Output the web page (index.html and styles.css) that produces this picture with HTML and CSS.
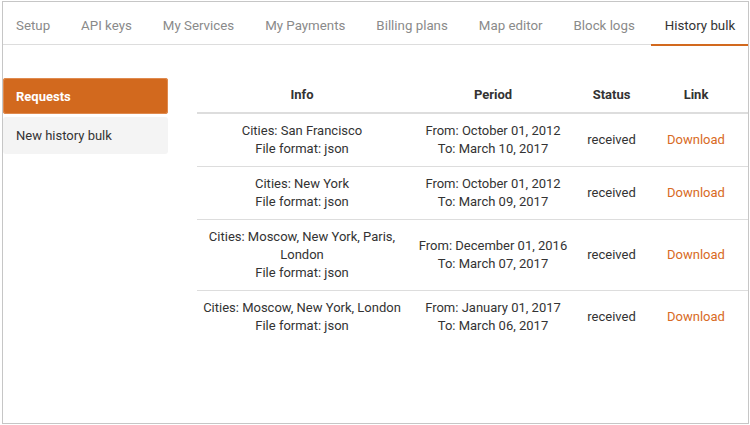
FILE: index.html
```html
<!DOCTYPE html>
<html>
<head>
<meta charset="utf-8">
<link rel="stylesheet" href="styles.css">
</head>
<body>
<div class="frame">
  <nav class="tabs">
    <a class="tab">Setup</a>
    <a class="tab">API keys</a>
    <a class="tab">My Services</a>
    <a class="tab">My Payments</a>
    <a class="tab">Billing plans</a>
    <a class="tab">Map editor</a>
    <a class="tab">Block logs</a>
    <a class="tab active">History bulk</a>
  </nav>
  <div class="content">
    <aside class="side">
      <div class="side-item selected">Requests</div>
      <div class="side-item">New history bulk</div>
    </aside>
    <table class="bulk">
      <colgroup>
        <col class="c-info"><col class="c-period"><col class="c-status"><col class="c-link">
      </colgroup>
      <thead>
        <tr><th>Info</th><th>Period</th><th>Status</th><th>Link</th></tr>
      </thead>
      <tbody>
        <tr>
          <td>Cities: San Francisco<br>File format: json</td>
          <td>From: October 01, 2012<br>To: March 10, 2017</td>
          <td>received</td>
          <td><a class="dl">Download</a></td>
        </tr>
        <tr>
          <td>Cities: New York<br>File format: json</td>
          <td>From: October 01, 2012<br>To: March 09, 2017</td>
          <td>received</td>
          <td><a class="dl">Download</a></td>
        </tr>
        <tr>
          <td>Cities: Moscow, New York, Paris, London<br>File format: json</td>
          <td>From: December 01, 2016<br>To: March 07, 2017</td>
          <td>received</td>
          <td><a class="dl">Download</a></td>
        </tr>
        <tr>
          <td>Cities: Moscow, New York, London<br>File format: json</td>
          <td>From: January 01, 2017<br>To: March 06, 2017</td>
          <td>received</td>
          <td><a class="dl">Download</a></td>
        </tr>
      </tbody>
    </table>
  </div>
</div>
</body>
</html>
```
FILE: styles.css
```css
html, body {
  margin: 0;
  padding: 0;
  background: #ffffff;
}
body {
  font-family: Roboto, "Liberation Sans", Arial, sans-serif;
  color: #333333;
}
.frame {
  box-sizing: border-box;
  margin: 1px 0 0 2px;
  width: 747px;
  height: 423px;
  border: 1px solid #c6c6c6;
  overflow: hidden;
}
.tabs {
  display: flex;
  gap: 1px;
  margin-left: -2px;
  height: 42px;
  border-bottom: 1px solid #dddddd;
}
.tab {
  display: block;
  flex: none;
  white-space: nowrap;
  padding: 15px 15px 0;
  font-size: 13.3px;
  line-height: 18px;
  color: #8a8a8a;
  cursor: pointer;
}
.tab.active {
  color: #333333;
  border-bottom: 2px solid #d2691e;
  height: 27px;
  margin-bottom: -1px;
  padding-left: 14px;
}
.content {
  display: flex;
  align-items: flex-start;
  padding-top: 33px;
}
.side {
  width: 165px;
  flex: none;
  display: flex;
  flex-direction: column;
  gap: 3px;
  margin-right: 29px;
}
.side-item {
  padding: 10px 13px 8px;
  font-size: 13px;
  line-height: 18px;
  color: #333333;
  background: #f4f4f4;
  border-radius: 3px;
}
.side-item.selected {
  background: #d2691e;
  color: #ffffff;
  font-weight: bold;
  box-shadow: inset 0 0 0 1px #e08a4e;
}
.side-item + .side-item {
  padding-bottom: 9px;
}
.bulk {
  flex: 1;
  border-collapse: collapse;
  table-layout: fixed;
  font-size: 13px;
  line-height: 18px;
}
.c-info { width: 210px; }
.c-period { width: 172px; }
.c-status { width: 65px; }
.c-link { width: 104px; }
.bulk th {
  font-weight: bold;
  padding: 8px 2px;
  border-bottom: 2px solid #dddddd;
  text-align: center;
}
.bulk td {
  padding: 8px 2px;
  text-align: center;
  vertical-align: middle;
  border-bottom: 1px solid #dddddd;
}
.bulk tbody tr:last-child td {
  border-bottom: none;
}
.dl {
  color: #d86a24;
  font-size: 13px;
  cursor: pointer;
}
```
